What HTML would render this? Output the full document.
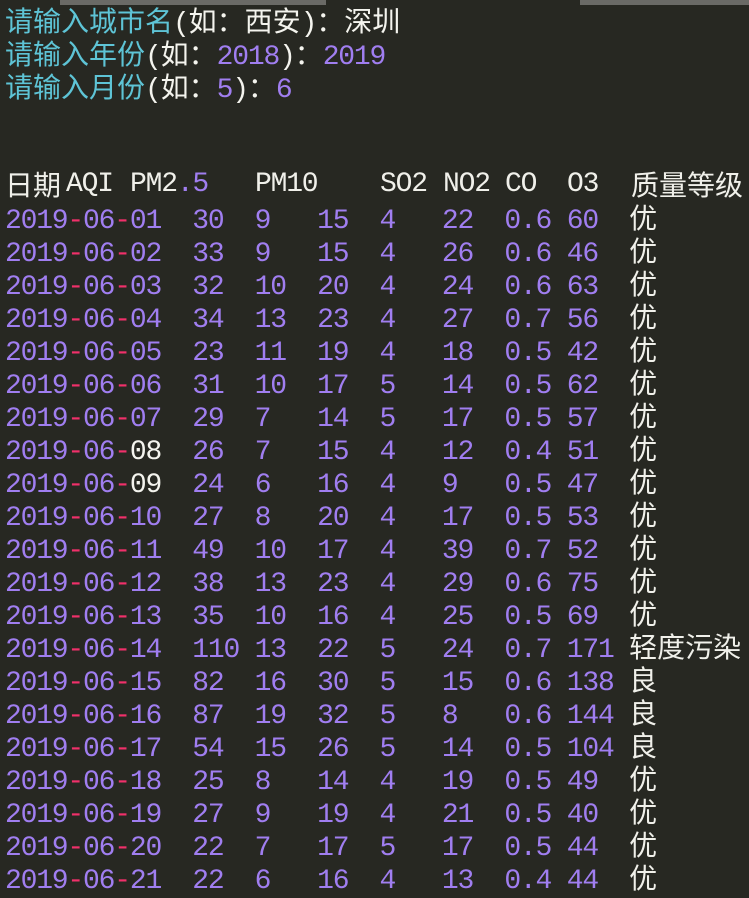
<!DOCTYPE html>
<html><head><meta charset="utf-8"><style>
html,body{margin:0;padding:0;}
body{width:749px;height:889px;background:#272822;overflow:hidden;position:relative;font-family:"Liberation Mono","Noto Sans CJK SC",monospace;font-size:28px;letter-spacing:-1.2px;color:#f0f0ea;}
.bar{position:absolute;top:0;height:5px;background:#6a6a66;}
.l{position:absolute;left:5px;height:33px;line-height:33px;white-space:pre;}
.c{color:#5ec4d6;}
.p{color:#a07ef0;}
.r{color:#f0306a;}
.w{color:#f4f4ee;}
.k{font-family:"Noto Sans CJK SC",sans-serif;font-size:28px;letter-spacing:0;}
.a{position:absolute;top:0;}
</style></head><body>
<div class="bar" style="left:60px;width:266px"></div>
<div class="bar" style="left:580px;width:169px"></div>

<div class="l" style="top:4px"><span class="c k">请输入城市名</span><span class="w">(<span class="k">如：西安</span>)<span class="k">：深圳</span></span></div>
<div class="l" style="top:37px"><span class="c k">请输入年份</span><span class="w">(<span class="k">如：</span></span><span class="p">2018</span><span class="w">)<span class="k">：</span></span><span class="p">2019</span></div>
<div class="l" style="top:70px"><span class="c k">请输入月份</span><span class="w">(<span class="k">如：</span></span><span class="p">5</span><span class="w">)<span class="k">：</span></span><span class="p">6</span></div>

<div class="l" style="top:168px;left:0;width:749px"><span class="a k" style="left:5px">日期</span><span class="a" style="left:66px">AQI</span><span class="a" style="left:130px">PM2<span class="p">.5</span></span><span class="a" style="left:255px">PM10</span><span class="a" style="left:380px">SO2</span><span class="a" style="left:443px">NO2</span><span class="a" style="left:505px">CO</span><span class="a" style="left:567px">O3</span><span class="a k" style="left:631px">质量等级</span></div>

<div class="l" style="top:201px"><span class="p">2019</span><span class="r">-</span><span class="p">06</span><span class="r">-</span><span class="p">01  30  9   15  4   22  0.6 60  </span><span class="k">优</span></div>
<div class="l" style="top:234px"><span class="p">2019</span><span class="r">-</span><span class="p">06</span><span class="r">-</span><span class="p">02  33  9   15  4   26  0.6 46  </span><span class="k">优</span></div>
<div class="l" style="top:267px"><span class="p">2019</span><span class="r">-</span><span class="p">06</span><span class="r">-</span><span class="p">03  32  10  20  4   24  0.6 63  </span><span class="k">优</span></div>
<div class="l" style="top:300px"><span class="p">2019</span><span class="r">-</span><span class="p">06</span><span class="r">-</span><span class="p">04  34  13  23  4   27  0.7 56  </span><span class="k">优</span></div>
<div class="l" style="top:333px"><span class="p">2019</span><span class="r">-</span><span class="p">06</span><span class="r">-</span><span class="p">05  23  11  19  4   18  0.5 42  </span><span class="k">优</span></div>
<div class="l" style="top:366px"><span class="p">2019</span><span class="r">-</span><span class="p">06</span><span class="r">-</span><span class="p">06  31  10  17  5   14  0.5 62  </span><span class="k">优</span></div>
<div class="l" style="top:399px"><span class="p">2019</span><span class="r">-</span><span class="p">06</span><span class="r">-</span><span class="p">07  29  7   14  5   17  0.5 57  </span><span class="k">优</span></div>
<div class="l" style="top:432px"><span class="p">2019</span><span class="r">-</span><span class="p">06</span><span class="r">-</span><span class="w">08</span><span class="p">  26  7   15  4   12  0.4 51  </span><span class="k">优</span></div>
<div class="l" style="top:465px"><span class="p">2019</span><span class="r">-</span><span class="p">06</span><span class="r">-</span><span class="w">09</span><span class="p">  24  6   16  4   9   0.5 47  </span><span class="k">优</span></div>
<div class="l" style="top:498px"><span class="p">2019</span><span class="r">-</span><span class="p">06</span><span class="r">-</span><span class="p">10  27  8   20  4   17  0.5 53  </span><span class="k">优</span></div>
<div class="l" style="top:531px"><span class="p">2019</span><span class="r">-</span><span class="p">06</span><span class="r">-</span><span class="p">11  49  10  17  4   39  0.7 52  </span><span class="k">优</span></div>
<div class="l" style="top:564px"><span class="p">2019</span><span class="r">-</span><span class="p">06</span><span class="r">-</span><span class="p">12  38  13  23  4   29  0.6 75  </span><span class="k">优</span></div>
<div class="l" style="top:597px"><span class="p">2019</span><span class="r">-</span><span class="p">06</span><span class="r">-</span><span class="p">13  35  10  16  4   25  0.5 69  </span><span class="k">优</span></div>
<div class="l" style="top:630px"><span class="p">2019</span><span class="r">-</span><span class="p">06</span><span class="r">-</span><span class="p">14  110 13  22  5   24  0.7 171 </span><span class="k">轻度污染</span></div>
<div class="l" style="top:663px"><span class="p">2019</span><span class="r">-</span><span class="p">06</span><span class="r">-</span><span class="p">15  82  16  30  5   15  0.6 138 </span><span class="k">良</span></div>
<div class="l" style="top:696px"><span class="p">2019</span><span class="r">-</span><span class="p">06</span><span class="r">-</span><span class="p">16  87  19  32  5   8   0.6 144 </span><span class="k">良</span></div>
<div class="l" style="top:729px"><span class="p">2019</span><span class="r">-</span><span class="p">06</span><span class="r">-</span><span class="p">17  54  15  26  5   14  0.5 104 </span><span class="k">良</span></div>
<div class="l" style="top:762px"><span class="p">2019</span><span class="r">-</span><span class="p">06</span><span class="r">-</span><span class="p">18  25  8   14  4   19  0.5 49  </span><span class="k">优</span></div>
<div class="l" style="top:795px"><span class="p">2019</span><span class="r">-</span><span class="p">06</span><span class="r">-</span><span class="p">19  27  9   19  4   21  0.5 40  </span><span class="k">优</span></div>
<div class="l" style="top:828px"><span class="p">2019</span><span class="r">-</span><span class="p">06</span><span class="r">-</span><span class="p">20  22  7   17  5   17  0.5 44  </span><span class="k">优</span></div>
<div class="l" style="top:861px"><span class="p">2019</span><span class="r">-</span><span class="p">06</span><span class="r">-</span><span class="p">21  22  6   16  4   13  0.4 44  </span><span class="k">优</span></div>
</body></html>
